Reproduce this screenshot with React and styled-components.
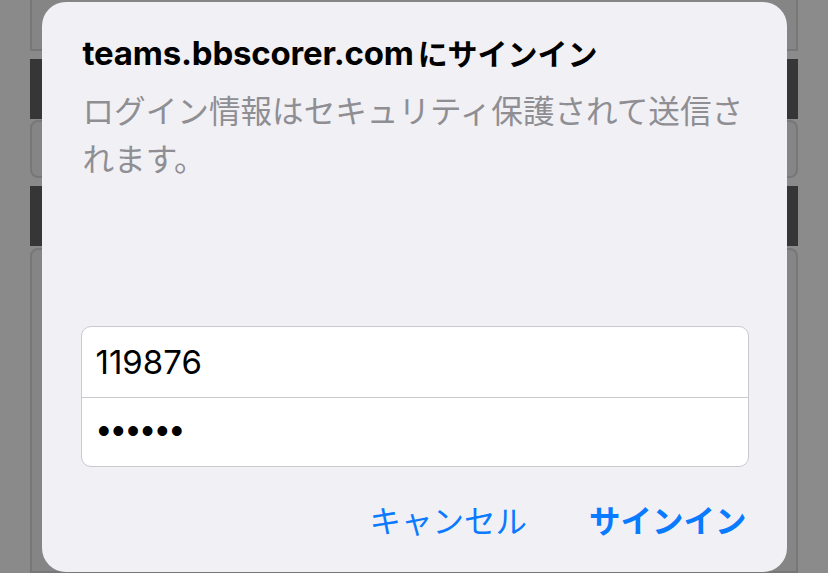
import React from "react";
import styled, { createGlobalStyle } from "styled-components";

const Global = createGlobalStyle`
  html, body { margin: 0; padding: 0; }
  body {
    width: 828px;
    height: 573px;
    overflow: hidden;
    background: #898989;
    font-family: Inter, "Noto Sans CJK JP", sans-serif;
  }
  #root { height: 573px; }
`;

const Screen = styled.div`
  position: relative;
  width: 828px;
  height: 573px;
  overflow: hidden;
  background: linear-gradient(90deg, #8a8a8a 0%, #888 50%, #8b8b8b 100%);
`;

const Page = styled.div`
  display: flex;
  flex-direction: column;
  width: 768px;
  height: 573px;
  margin-left: 30px;
`;

const Card = styled.div`
  box-sizing: border-box;
  border: 2px solid #777;
  border-top-width: ${(p) => (p.$openTop ? 0 : 2)}px;
  background: #858585;
  border-radius: ${(p) => p.$radius || "8px"};
  height: ${(p) => p.$h}px;
  flex: ${(p) => (p.$grow ? 1 : "none")};
  margin-top: ${(p) => p.$mt || 0}px;
`;

const DarkBar = styled.div`
  height: ${(p) => p.$h}px;
  background: #363636;
  margin-top: ${(p) => p.$mt || 0}px;
  flex: none;
`;

const Overlay = styled.div`
  position: absolute;
  inset: 0;
  display: flex;
  align-items: center;
  justify-content: center;
`;

const Dialog = styled.div`
  box-sizing: border-box;
  width: 745px;
  height: 570px;
  background: #f1f0f5;
  border-radius: 24px;
  padding: 29px 38px 31px 39px;
  display: flex;
  flex-direction: column;
`;

const Title = styled.h1`
  margin: 0 0 0 2px;
  font-family: Inter, "Noto Sans CJK JP", sans-serif;
  font-weight: 700;
  font-size: 30px;
  line-height: 44px;
  color: #000;
  white-space: nowrap;
`;

const Domain = styled.span`
  font-size: 33px;
  letter-spacing: -0.2px;
  margin-right: 4px;
`;

const Message = styled.p`
  margin: 9px -12px 0 2px;
  font-family: "Noto Sans CJK JP", sans-serif;
  font-weight: 400;
  font-size: 31.6px;
  line-height: 48px;
  color: #8e8e93;
`;

const Spacer = styled.div`
  flex: 1;
`;

const Fields = styled.div`
  box-sizing: border-box;
  border: 1px solid #c9c9ce;
  border-radius: 10px;
  background: #fff;
  display: flex;
  flex-direction: column;
  overflow: hidden;
`;

const Field = styled.div`
  box-sizing: border-box;
  height: ${(p) => p.$h}px;
  display: flex;
  align-items: center;
  padding-left: 14px;
  border-top: ${(p) => (p.$divider ? "1px solid #c9c9ce" : "none")};
  font-family: Inter, "Noto Sans CJK JP", sans-serif;
  font-size: 33px;
  color: #000;
`;

const Bullets = styled.span`
  font-family: "Liberation Sans", sans-serif;
  font-size: 36px;
  letter-spacing: 2px;
  padding-left: 2px;
  padding-bottom: 2px;
`;

const Actions = styled.div`
  display: flex;
  justify-content: flex-end;
  align-items: center;
  gap: 62px;
  margin-top: 30px;
  padding-right: 2px;
`;

const ActionButton = styled.button`
  border: none;
  background: none;
  padding: 0;
  font-family: "Noto Sans CJK JP", sans-serif;
  font-size: 31.5px;
  line-height: 44px;
  font-weight: ${(p) => (p.$primary ? 700 : 400)};
  color: #0a7aff;
`;

export default function App() {
  return (
    <>
      <Global />
      <Screen>
        <Page>
          <Card $h={51} $openTop $radius="0 0 2px 2px" />
          <DarkBar $h={60} $mt={8} />
          <Card $h={58} $mt={1} />
          <DarkBar $h={60} $mt={8} />
          <Card $grow $mt={2} $radius="8px 8px 0 0" />
        </Page>
        <Overlay>
          <Dialog>
            <Title>
              <Domain>teams.bbscorer.com</Domain>にサインイン
            </Title>
            <Message>ログイン情報はセキュリティ保護されて送信されます。</Message>
            <Spacer />
            <Fields>
              <Field $h={70}>119876</Field>
              <Field $h={69} $divider>
                <Bullets>••••••</Bullets>
              </Field>
            </Fields>
            <Actions>
              <ActionButton>キャンセル</ActionButton>
              <ActionButton $primary>サインイン</ActionButton>
            </Actions>
          </Dialog>
        </Overlay>
      </Screen>
    </>
  );
}
